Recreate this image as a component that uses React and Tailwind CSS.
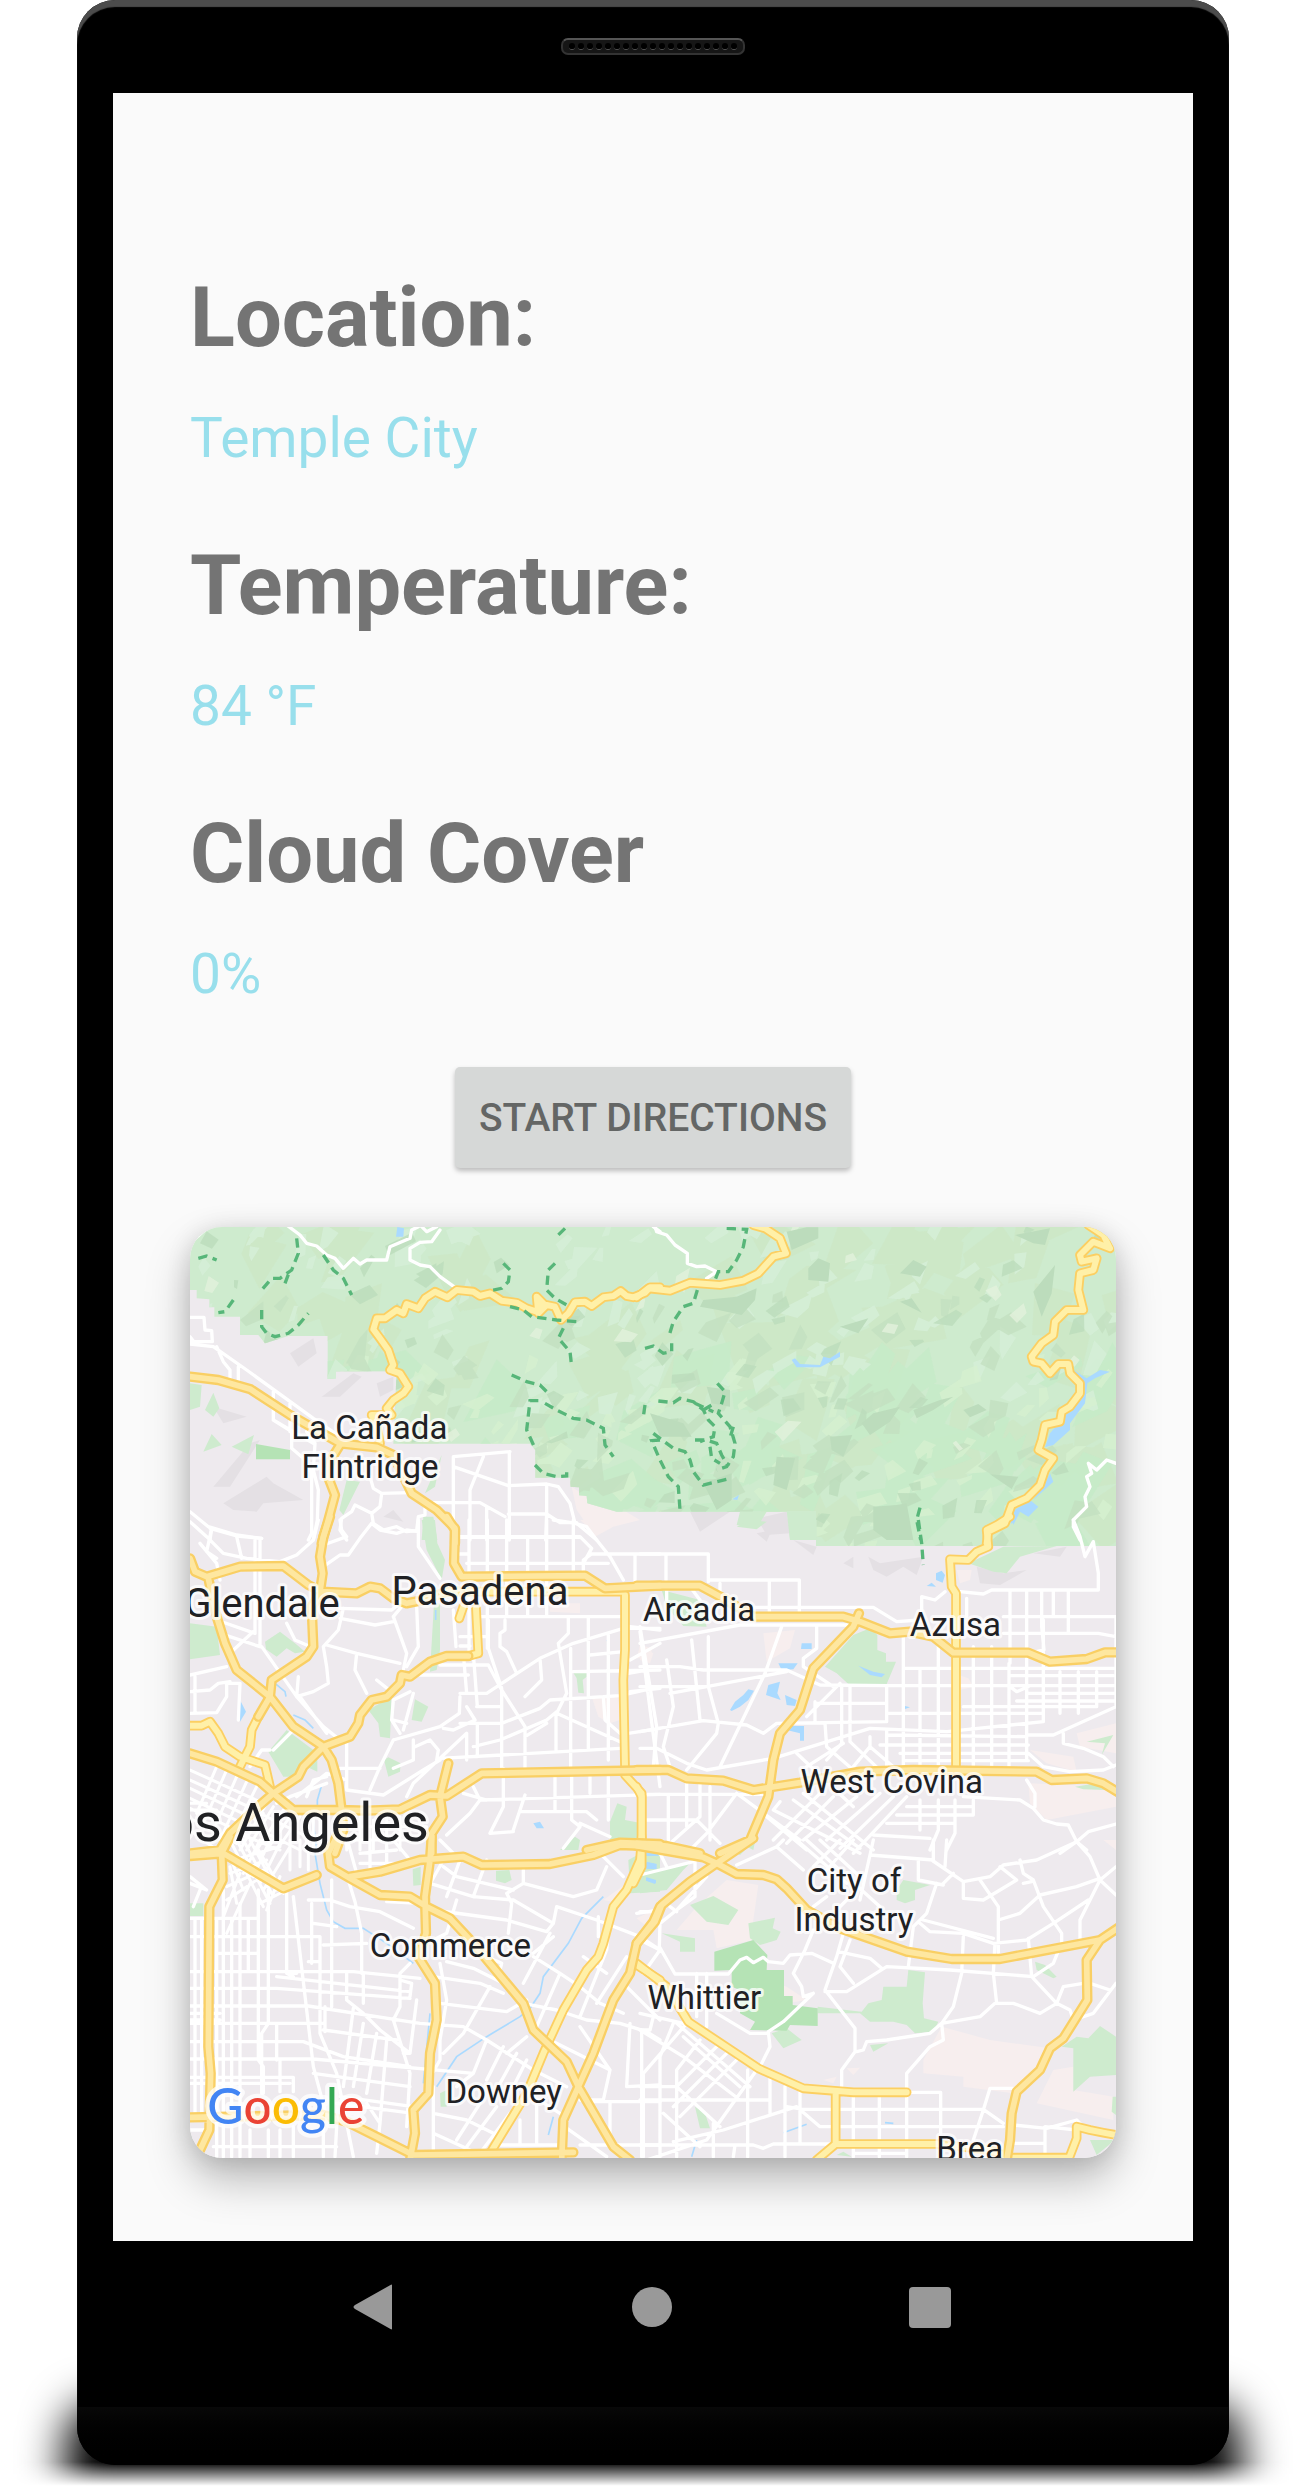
import React from "react";

/* Map artwork: 3 units per pixel, split into six tiles that are placed by their origin. */
const FOREST =
  "M0 0V189H20V214L58 217V241H73V269H150V324H205L225 349 295 327H413V456L438 454V433H620L610 650H1020L1036 669V752H1140L1142 779 1167 781V805L1190 807 1192 829 1280 854H1878V957H2778V0Z";

const TILES = [
  {
    at: "translate(-30 -51)",
    minor:
      "M320 45L360 75 380 100 410 108 440 135 465 145 490 175 520 145 540 162 560 150 620 150 630 110 690 85 695 60 715 50M780 60L755 95 720 97 690 115V150L720 165 750 170 780 200 825 232M725 50L740 65 770 50M1420 50L1440 65M30 100L85 50M30 322H72L75 360 95 362 97 395H30M30 402L100 410 200 480 400 625 480 680M30 380L45 400M110 410L130 455 150 480V505M175 470V510M280 545V630L335 665V715L370 745 395 790V970L385 990M330 580V665M280 630L400 700M380 665L405 700 400 780 415 840 412 930 400 990M990 725L820 740V930M910 740L870 840V990M820 770L985 827 1100 822 1135 830 1170 880 1185 940 1220 950 1250 990M988 725V990M1100 822V910L1097 990M760 878H900L975 920M985 912H1100L1140 938H1190M920 890V990M840 982H1200M570 800L580 835 605 850 690 848M605 850L600 890 575 910 525 885 515 905 485 925 480 960 500 990M575 910L580 940 610 960 650 950 680 965 710 962 715 920 735 915V870M30 905L85 950 170 975 245 985M95 955L90 990",
    trail:
      "M350 85L355 130 335 180 300 205 275 205 245 240M315 220L330 180M430 135L460 180 490 205 515 255M160 270L135 305 115 308M245 300V350L260 370 285 380 325 370 355 345 385 310M55 145L80 138 110 150M970 160L990 180 985 215 965 235 930 242M1155 55L1125 85M1125 160L1105 180 1100 240 1125 265 1160 285M990 290L1030 300 1055 320 1130 330 1190 335M1150 355L1135 385 1170 425 1175 470M995 495L1040 515 1080 525 1105 550M1075 572H1050L1040 660 1065 715M1065 765L1090 790 1130 800 1160 798V775M1095 580L1130 600 1180 625 1220 630 1270 655 1275 705 1300 740",
    water: "M652 51L672 55 670 80 648 80Z",
    park: "M30 520L65 525 60 590 30 600ZM75 600L100 548 118 595 100 620ZM70 725L95 672 125 705ZM155 710L222 675 205 733ZM735 850L785 735 765 830ZM500 810L540 815 490 915 478 900ZM730 920L760 920 772 990 725 990ZM400 780L380 700 410 820Z",
    parkDark: "M228 702L262 708 330 720V748H228Z",
    pink: "M1175 830L1235 870 1330 900 1380 930 1300 950 1245 980 1190 900Z",
    shade:
      "M330 430L400 385 410 430 355 470ZM425 560L520 490 545 500 480 560ZM100 590L200 620 130 640ZM130 880L260 800 280 820 370 870 250 880 230 905 160 900ZM210 700L240 690 150 830 100 830ZM610 920L640 900 670 935ZM590 520L640 500 640 540 600 560Z",
    freeway:
      "M30 500L115 510 212 538 330 615 480 700 590 712 640 735 695 850 770 900 825 955V1000M480 705L455 745 440 790 465 855 445 930 425 1000",
    state:
      "M1440 232H1410L1395 248 1360 262 1340 258 1322 243 1300 258 1270 262 1235 288 1215 275 1185 277 1165 310 1143 330 1125 290 1100 285 1075 310 1070 260 1090 280 1070 305 1040 295 1010 278 965 272 930 250 900 258 880 245 830 240 802 262 765 245 735 265 715 295 680 282 670 310 650 300 615 325 590 325 580 358 600 385 625 420 640 465 630 480 660 490 685 530 670 550 640 570 620 595 635 615 575 615 590 650 600 700",
  },
  {
    at: "translate(1350 -51)",
    minor:
      "M45 50L50 65 80 75 105 105 142 130V160L170 170 195 168 230 185 200 205M1428 760L1400 750 1370 780 1345 760 1355 790 1340 800 1350 830 1335 860 1340 890 1300 930V950L1320 990",
    trail:
      "M260 55L320 58 310 110 290 150 265 185 235 185 225 210M172 240L160 280 130 290 100 335 85 385M15 415L40 408 70 430 95 425V400M232 520L255 545 245 580 235 610 270 650 285 700 280 740 260 770 230 780M55 573L100 578 120 565 160 575 190 600 205 630 225 650 220 680 180 695M190 600L215 585M165 580L220 605M15 585L10 620M40 670L60 685 100 715 135 725 150 750 160 785 190 825 260 808M60 690L35 692 60 750 85 800 115 830 120 900M165 690L200 690 230 700 245 735 265 770M210 710L215 745 240 760M280 650L268 690M840 893L830 930 842 990",
    water:
      "M455 450L465 445 480 462 540 465 550 440 570 445 600 425V440L540 472 470 472ZM1300 480L1340 505 1380 480 1410 485 1365 505 1342 520 1335 580 1290 640 1290 660 1240 705 1215 712 1230 670 1290 600 1325 540ZM1230 790L1240 815 1180 870 1215 820ZM1115 905L1170 870 1195 890 1165 920 1140 905 1120 945ZM277 868L297 855 292 870Z",
    park: "M300 905L380 905 350 955 290 945ZM440 904L528 904V985L450 990Z",
    shade: "M150 905L270 905 180 965ZM350 925L440 905 450 970 380 975Z",
    relief:
      "M505 175L535 145 570 160 565 215 505 210ZM290 260L350 235 345 270 305 315 235 300 180 290 190 270ZM780 190L820 150 860 170 840 200ZM600 350L685 325 655 370ZM1180 245L1245 165 1235 250 1205 320ZM1125 75L1230 55 1215 105 1180 100ZM780 275L815 265 845 308ZM665 640L700 610 780 590 750 635 690 675ZM570 680L637 675 610 740 575 720ZM410 740L465 745 440 840 400 825ZM1050 793L1135 800 1115 837ZM700 890L770 885 800 880 820 990H740L700 960ZM820 600L900 570 940 560 880 600 830 625ZM970 600L1015 582 1040 600 990 622ZM440 65L500 52 535 52V85L455 120ZM30 610L130 640 155 680 60 680ZM200 530L270 540V590L215 580ZM190 820L275 790V870L230 900Z",
    state:
      "M-10 262L25 235 90 242 150 218 240 225 310 212 355 190 400 140 438 130 420 85 375 55 340 45M1345 45L1390 75 1410 115 1360 95 1320 135 1325 155 1370 145 1360 180 1320 190 1315 240 1330 300 1280 300 1245 335 1240 375 1205 400 1175 440 1180 455 1205 460 1230 490 1255 462 1285 462 1290 490 1320 520V550L1290 590 1265 605 1260 635 1215 645 1205 690 1195 720 1240 745 1215 780 1200 825 1160 865 1115 885 1095 940 1045 965 1040 1000",
  },
  {
    at: "translate(-30 879)",
    minor:
      "M30 5L80 50 130 100 200 115 300 125 350 105 400 60 415 0M95 25L80 95 110 115M170 50L185 115M90 25L170 48 245 55M240 55V380M225 60V340M60 70L110 130 120 180M480 0L485 30 500 50 430 75M430 140L480 105 505 105 540 55 575 10 600 30 650 40 680 30 715 35M715 0V80L780 175M867 0V400M922 0V385M980 0V290M835 50H1200L1235 85 1210 130M1043 50V290M1100 0V290M1180 0V155M1120 0L1190 10 1250 60 1290 110 1330 180M1440 102H1235L1210 120V160M835 102H865M860 130H1285M1365 105V190M900 290H1320M480 265L635 270 665 245M480 295L585 315 640 305M640 290L680 400 670 450M640 290L665 260M710 260L715 380 680 440M440 375L530 400 660 430M530 400L525 450 560 520M490 265L475 330 430 380 440 440 445 490 400 515 350 530M320 310L345 360 380 375M245 380L350 530 430 620 480 660M360 530L440 640M225 330L150 400M110 300L225 340M120 340L240 380M30 465L140 440M45 470V580M30 580L110 578 140 530V490L180 490 175 600M30 515L90 510 115 490 150 485M350 530L355 470M820 270L828 380M840 350H925M840 378H870M780 435H925L965 510 1035 620V745M850 400L860 520M880 400L892 560M720 465H865M925 300V385L965 505V745M975 300V330L960 340V380L980 395 1010 460M890 560H965M840 610H965L1080 565 1110 540 1320 527 1440 500M840 520H920L1080 415 1180 370 1330 325 1440 325M1080 415L1085 480 1035 530M840 530L838 580 780 620 640 660M860 560L885 600 820 630 790 625M1225 290V690M1165 295V340L1135 370 1160 520 1130 580 1320 665M1172 385V745M1285 345V720M1230 405L1330 395M1180 455L1440 450M1130 575L1100 600 960 660 880 680M1128 580V690M1035 650L1100 610M780 715L965 705 1320 685M892 610V710M860 640V720M1270 530L1275 600 1320 640M705 680L750 660 775 690 770 720M700 660V720L640 745M860 640L700 790 680 830M500 665V810L610 825 730 750 780 720M480 745H600M640 660L600 740 570 810M690 515L640 540 635 600 660 640M700 520L670 630M640 600L680 610M590 480L640 520M270 690L245 690 210 740M280 690L340 630M380 830L400 780 440 770M350 830L440 760 500 780M290 850L330 830 440 790M880 800L900 840 1440 823M850 820L920 840M970 745V860L930 940 1000 935M1035 825L1000 930M1025 875H1220M1125 770V875M1175 770V900L1200 920 1150 985M1285 770V900M1230 770V820M800 945L870 880 900 840M1220 875L1250 900M1200 910L1290 950M1345 640L1440 625M1350 420L1440 370M1350 320L1440 330M1380 335L1440 800M1350 515L1440 505M1345 460L1400 450",
    dense:
      "M30 750L250 850M30 780L250 880M30 805L240 905M30 835L220 925M30 865L200 945M40 900L170 970M110 740L50 880M140 750L70 910M170 770L100 930M200 785L120 960M230 800L140 980M260 850L180 990M280 860L200 990M310 870L230 990M330 890L260 990M360 890L290 990M150 930L300 990M180 900L360 990M240 880L400 960M400 880V990M380 880V990M420 880V990M500 900V990M540 880V990M580 900V990M620 890V990M660 890V990M510 920H740M510 960H700M30 870H110M30 850H80M30 930L110 990",
    water:
      "M180 540L198 575 180 605ZM1060 910L1080 905 1092 925 1070 925ZM1280 360H1288L1284 382Z",
    stream:
      "M285 490L315 515 318 530M340 585L375 600 400 625M425 795L412 840V870M400 910L410 990M767 270V300",
    park: "M30 310L110 320 120 405 30 418ZM255 365L300 335 345 370 375 395 345 400 320 385 290 410 258 388ZM725 0H765L772 70 795 120 785 180 740 90ZM762 250H780V390L770 450 750 455ZM565 570L635 530 630 655 600 650 595 610ZM695 600L705 538 745 560 725 605ZM612 720L625 712 662 730 660 755 625 770ZM265 695L320 630 400 690 370 770 310 770 292 740ZM1180 458H1220V470L1208 480 1212 520 1195 518 1190 475ZM1290 905L1312 850 1340 860 1335 900 1385 910V965L1290 960ZM1140 990L1185 950 1200 960 1195 990ZM395 720H412V755L380 740Z",
    pink: "M1235 530L1320 525V600L1290 610 1255 590ZM1380 375L1415 385V415H1370ZM1110 250H1200V280L1110 275ZM1200 0H1300L1250 45Z",
    freeway:
      "M450 -10L430 50 420 110 428 160 420 215M30 115L45 155 80 170 180 140 310 138 385 195 425 215 530 220 570 200 600 205 640 235 680 250 730 240 800 215 840 215M800 -10L825 30 822 130 845 170 1215 167 1275 205 1440 197M85 175L110 290 135 370 170 450 270 530 340 620 430 680 455 720 475 790 485 870 490 930 465 1000M425 215L395 260 400 380 380 410 275 480 270 530 235 590M30 700L110 725 240 785 280 820 340 870 480 870 560 872 660 868 750 825 800 828 905 760 1440 750M120 990L150 940 240 855 280 820 355 770 370 740 430 680 510 650 535 610 540 585 575 540 620 530 660 490 665 465 690 470 750 425 800 408H865M805 730L780 830 788 890 755 940V1000M30 1000L120 990M1220 990L1320 968 1440 972",
    state:
      "M840 215H1330M235 590L215 630 210 680 180 740M30 617H65L90 605 115 640 135 680 180 710 255 735 270 800M865 408L895 400 888 265M838 295L850 260M1335 225V390L1330 480 1335 740M1335 765L1385 820V990",
  },
  {
    at: "translate(1350 879)",
    minor:
      "M0 102H205V185M78 105V180M205 180H478V275M388 180V280M240 190V230M340 262H700L770 305 840 300M530 315V385L490 415V440L580 500M0 370L300 315H640M425 320L375 460 240 740M0 440H120L190 450 440 450 540 495 745 497H1428M0 500H200L440 455M90 520L200 500M155 360L180 600M205 350V500L235 610 230 640 140 750M0 320L50 620 40 740M80 420L100 560 70 680 90 740M0 635L190 602 320 615 370 640 410 610 740 605V500M0 685H50L140 730 200 750 400 715 690 625 920 635 1210 605V300M80 210V240M150 200L180 240M525 545V605M525 550H740M600 490L500 590M605 500V670L560 720M630 500V665L740 770M740 580H1210M790 350V760M845 300V230L885 240 915 215M960 215L1030 222 1055 210H1375V160L1360 65 1335 110 1320 50 1300 0M980 235V290M1110 210V430M1160 210V720M1205 215V320L1212 390 1165 400M1240 210V290M1285 210V340M1090 290H1428V560L1240 645H1165M1090 340H1375L1428 350M1000 380V740M1055 380V740M1107 430V740M795 445H1428M1110 467H1420M1110 500L1130 515 1165 500M1165 520H1428M1130 543H1428M970 560H1370M1210 455V550M1260 455V580M1315 455V580M1370 455V560M895 370V740M840 450V740M740 645L1160 650M720 675H1165M780 700H1165M790 722H1165M470 700L640 860M555 610L560 680 640 750M690 650V680L760 740M610 670L500 740M740 630V740M690 680L640 740M0 823H380M85 825V970M0 900H170M140 780V920M180 790V890L85 975M210 800V960M290 820L200 940 140 1000M170 900L240 970M290 820L480 960M420 845L400 870 660 1000M380 890L500 990M460 840L660 985M490 820L700 990M540 820L400 960M580 830L440 970M650 830L490 960M720 820L560 960M760 830L600 985M800 830L640 1000M770 885H1000V840M740 910H945V840M800 860H1000M895 840V930L870 990M840 840V930M700 945L870 955M945 910V940L920 990M970 830L1140 840 1180 865 1210 900 1250 912 1285 915 1310 965 1260 1000M1310 965L1345 935 1428 912M1310 965L1340 990M1160 780L1185 820V860M1165 700L1210 740 1290 755 1390 750 1428 735M1270 640V670L1330 685 1390 710 1420 740",
    trail: "M835 0L845 70 850 135",
    water:
      "M270 570L285 545 310 525 325 508 342 512 325 540 300 560 275 573ZM385 495L420 485 412 520 422 540 378 525ZM435 525L470 540 465 558 440 555ZM415 430H473L460 448 425 450ZM485 370H515V387H483ZM440 630L455 618H492V662H480V640ZM655 437L700 455 735 462 725 472 690 465ZM888 160L905 152 915 165 908 188 888 180ZM860 198L875 188 888 200ZM795 558L810 562 795 567ZM1110 0H1125L1115 12Z",
    park: "M555 440L640 345 690 325 712 345V390L738 400V425H768L740 492H625L590 460ZM65 210L180 240 200 320 130 318 80 260ZM985 130L1090 80 1250 78 1140 110 1100 160 1060 155ZM290 20L330 0 380 5 350 28ZM450 60L445 0H530V60ZM1340 665L1420 645 1385 705 1395 670ZM1305 800L1370 790 1400 810 1330 808ZM300 970L345 965 340 990Z",
    pink: "M370 340L465 330 450 385 380 425ZM940 460L985 475 1000 500 960 510ZM950 150H995L990 180 960 190ZM1170 690L1300 710 1310 755 1220 730ZM1165 790L1428 800V860L1220 900 1170 850ZM1310 640L1428 610V700L1320 680ZM0 380L40 400 30 430 0 420Z",
    shade:
      "M610 130L640 110V145ZM685 110L720 130 850 110 830 165 790 140 740 170 700 150ZM1010 140L1090 160 1160 150 1080 195 1020 190ZM350 40L395 30 380 65ZM460 60L530 80 520 105ZM1180 100L1280 80 1260 110Z",
    freeway:
      "M-10 197H180L250 235 340 290H610L660 305 750 340 810 335 880 350 940 398H1165L1230 425 1340 417 1395 397H1440M657 280L640 320 520 445 480 570 420 640 400 720 385 830 330 960 240 1000M-10 750H85L140 775 250 782 340 810 480 788 660 755 820 750 1190 755 1235 780 1340 775 1390 790 1440 820M-10 970L80 978 180 1000",
    state:
      "M1110 -10L1070 15 1040 30 1045 80 1010 95 985 120 930 118 935 200 948 220V740M-10 800L5 830V970",
  },
  {
    at: "translate(-30 1839)",
    minor:
      "M45 235V820M65 235V820M110 235V950M130 150V950M155 235V950M180 190V950M205 235V395M235 150V660L250 680V760M265 150V550L245 580V760M290 555V660M30 235H230M30 290H420M110 340H230M30 395H520L720 415M30 445H290L690 475M30 498H385L720 550 850 560 920 600 1060 690 1160 740M30 520H120M30 540H120M30 550H430M30 605H370L490 650 690 680M30 657H400L880 700M30 712H340V755M30 730H330M30 870H90M100 920H470M300 660V755M300 870V950M340 860V950M265 870V950M210 870V950M430 860V950M470 860L465 950M320 160V400L340 410M340 170L400 680 440 830M320 400L350 400M395 190V370M455 120V500M545 280V400M420 290V580L470 700 520 950M435 500V575M500 400V480L550 520 600 570 690 640M550 400V490M290 410L690 455M385 365H415M430 570L650 600M400 700L690 740M470 790L700 820M520 505L490 740M550 550L520 740M590 580L560 760M620 600L600 850M690 370L660 400V500L640 540 690 700 680 860M660 420L695 430 690 470M710 480L690 640H670M385 180H450L510 200 600 215 700 265M400 250L470 260M430 315L560 310M505 120L525 185 545 280M620 185L720 190M505 10L530 100M570 0V90M620 20V80M540 40L650 30M540 70H640M640 0L690 60M790 60L740 150M840 60L800 170M790 80L830 110 1000 150M750 130L880 170 1000 180 1120 250M760 210L980 240 1100 275 1120 250 1130 200 1250 240 1380 290 1440 330M780 0L830 50M920 60L880 170M1030 90V130L980 160 995 190 985 280M1030 130L1180 170 1250 150 1280 80M830 180L800 280 760 300M780 370L800 480 780 600V660L740 730M800 365L880 385 970 430 1030 490 1130 510 1220 540 1320 550 1400 575 1440 600M920 350L965 370 960 390M760 410L900 430 970 460M780 490L980 515 1040 480M1110 280L1030 430M1060 350L1140 400 1200 440 1260 490 1330 520M1140 400L1070 560M1120 290L1060 340M1210 350L1280 400M1280 330L1200 530M1340 350L1250 490M1255 230V290M1290 220L1280 330M930 440L850 580 790 640M920 600L880 700 830 740M970 620L920 720M1010 640L960 730M1040 660L1000 740M1040 590L980 640M1060 580L1100 600M1110 600L1290 690 1270 780 1200 780M1200 560L1290 690M1350 550L1340 740 1440 735M1230 785H1440M1290 785V915M1385 570V950M1200 915H1440M1020 840V915M960 915H1140M1140 850L1280 950M1060 770L1140 820M900 790L830 900M950 800L860 920M990 820L900 940M760 740V950M760 820L860 840 940 880M760 880L870 930M540 850L700 950M560 790L600 850 590 940M480 770L700 800M1070 790V915M1370 220L1440 210M1340 440L1440 540M30 130L80 150 30 110M60 150L40 200M1270 50L1330 110",
    dense:
      "M150 0L250 200M170 0L270 190M190 0L280 170M210 0L290 150M230 20L310 160M160 60L300 20M150 100L260 60M140 180L260 100M140 140L250 90M180 100L130 230M210 130L140 280M240 0L190 100M270 0L220 110M300 10L240 130M330 20L250 150M330 90V0M360 80V0M385 90V0M300 110L260 210M320 150L240 190M150 50L190 150M150 80L170 190",
    water: "M1400 65L1430 72V88L1398 86ZM1398 32L1432 38V48H1402ZM1400 112L1428 120V130L1400 122Z",
    stream:
      "M405 40L420 130 440 210 460 245 495 265 550 265 620 310 700 370M750 520L730 730M1270 170L1205 235 1165 310 1090 410 1080 460 1050 505 1020 530 920 590 830 650 770 740M1120 830L1105 885",
    park: "M30 190H70V228H30ZM698 88L722 80V135L700 137ZM948 92L988 90 995 120 975 130 948 122ZM1345 60L1400 30H1440V155L1350 160ZM780 760L800 750V800H782Z",
    pink: "M1270 180L1340 130 1320 190ZM1370 235L1440 200 1400 260Z",
    freeway:
      "M30 48L130 40 310 145 410 105M150 -10L125 40 128 120 88 200 85 620 92 700 88 870 60 930M470 -10L445 40 450 80 510 115 600 165 690 170 740 200 810 235 880 310 930 370 1030 490 1060 570 1160 665 1195 740 1300 920 1350 960M510 110L600 95 720 60 850 50 905 75 1110 72 1240 45 1320 15 1440 20M755 -10L750 60 735 170 738 280 715 350 765 430 770 540 750 640 745 760 700 810 705 880 690 960M30 832L430 825 500 845 700 945 1180 937M1440 200L1420 245 1370 310 1350 400 1300 480 1240 640 1195 740 1150 840 1145 960",
    state:
      "M1385 0L1380 60 1340 150 1300 200 1270 310 1255 350 1220 390 1150 510 1090 640 1040 760 930 940M1370 375L1440 420",
  },
  {
    at: "translate(1350 1839)",
    minor:
      "M0 105L160 65M60 40L80 80M110 210L165 170V60M90 200L110 215M0 215H50M200 110L110 210 60 250 58 320 105 402H265L300 360 320 352 340 368 370 352 385 365 430 370 450 345 515 340 580 370M0 300L60 330 10 400M170 400V530M200 400V560M290 75L410 20 430 0M410 20L490 90M470 0L620 130M500 0L720 200M540 0L660 110M600 0L520 80M640 0L560 90M700 0L660 180M690 45L880 60V0M520 200L560 170M590 210L640 160M835 60V120L910 135M875 60L970 125 1050 110 1090 75 1190 60 1310 5 1350 50 1380 120 1428 165M970 125V175L1030 180 1130 120 1080 80M1020 120L1075 200V340M1140 60L1150 100 1180 120 1210 200 1265 280V320M1150 130L1175 125M1200 165L1310 140 1380 115M1380 120L1320 240V320M1075 240L1140 220 1200 165M1345 180L1240 250M1380 120L1428 80M910 130L940 100M890 130L860 220 820 260 805 380M915 80L920 0M840 250L870 275 970 280 1060 310 1160 300 1240 250M850 240L1060 295M970 290L965 400 940 500 905 550 870 580 740 600 680 605 670 630 650 635M1065 310L1060 400 1070 490M520 270L495 330 460 400 485 440 490 470 520 460M610 280L590 350 555 450 645 565V635L605 690V750M630 300L600 380 640 430M595 335L690 355 725 385M555 455H620L740 380 930 390 1180 410 1240 370 1260 320M1165 295L1175 410 1250 490 1290 510 1300 540 1360 520 1428 430M905 550L1020 530 1065 490H1120L1200 520 1250 490 1270 440 1330 430M1350 430L1410 450M905 550L910 600 870 620 800 700V950M520 460L430 545 385 575 390 620 360 680M230 520L330 580 385 580M390 710V820M435 740V950M480 755V910M323 690V950M0 570L130 650 300 780H380M140 550L10 700V950M100 550L60 650V950M180 600L110 690V950M0 740H110L240 860M230 620L110 740M260 640L100 800M300 650L120 830M350 690L200 900 20 960M0 520L130 550M0 570L30 570 40 530M110 550L330 740M130 590L300 740M70 820L180 920M0 780H390M0 915H340L370 925 400 912H580M100 905L250 870 470 800 540 860H1090M440 800L490 808H1030L1090 850M220 850V950M280 950L285 915M640 770V950M718 770V950M810 757H902V880M1120 745H1050L1030 810 1000 900M1120 855L1220 865 1310 840 1320 850M1120 910H1215V860L1310 870M1215 910V950M640 940H800",
    stream: "M430 878L500 853M735 848L760 850M170 900L155 950",
    water: "M15 32L55 40V48H18ZM18 68L48 72V85H15ZM18 112L48 125 45 132 18 122Z",
    park: "M150 195L220 168 295 210 265 255 200 245ZM325 250L405 233 398 265 422 275 410 300 360 315 330 295ZM65 280L165 295V335H120V305ZM533 500L665 515 685 490 725 480 730 440 800 440 805 390 855 397 848 490 852 535 895 545 880 575 825 580 800 555 760 545 690 545 660 520 533 520ZM395 580L440 565 485 600 430 625ZM1265 620L1310 590 1345 595 1380 558 1428 590V705L1350 710 1300 755V625ZM770 150L790 120 870 135 825 150V180L795 190 770 180ZM165 800L195 820 210 865 180 865ZM690 615L745 610 700 635ZM1350 900H1425L1370 945ZM1185 365L1215 375 1250 410 1240 415 1190 390ZM0 100L80 85 160 60 130 90 80 150 0 160ZM590 945L610 935 635 950ZM1418 770H1428V825L1415 815ZM290 40L345 0 300 45Z",
    parkDark:
      "M223 335L340 300 382 345 380 390H432V468H458V495L533 505V558L450 555 440 572 330 570 345 545 300 520V450L275 440V390L223 392Z",
    pink: "M170 200L260 120 355 135 340 240V300L230 325 220 270 110 270ZM850 660L905 560 1050 600 1230 625 1200 690 1120 760 970 740V710L850 700ZM1240 690L1300 680V750L1420 770V840L1190 790ZM380 420L440 440 500 480 440 490ZM550 720L590 710 580 730ZM620 685L660 683 640 705ZM1390 0H1428V30Z",
    freeway:
      "M-10 17L190 52 230 70 290 102 370 105 410 118 440 145 500 210 600 265 800 335 935 357H1080L1380 300 1440 260M340 -5L230 70 150 125 65 195 45 245 -10 310M1380 300L1340 360 1342 480 1270 595 1230 625 1200 690 1130 755 1115 820 1110 900 1100 960",
    state:
      "M-10 370L80 440 145 545 355 685 490 745 640 757H800M587 760V912H890L1050 930 1110 953H1285M587 912L530 960M1428 885L1390 878 1350 870 1310 860V895L1285 960M5 -10V80L-20 130",
  },
];

const LABELS = [
  ["La Cañada", 538, 636, 99],
  ["Flintridge", 540, 752, 99],
  ["Glendale", 216, 1171, 120],
  ["Pasadena", 870, 1134, 120],
  ["Arcadia", 1527, 1182, 99],
  ["Azusa", 2296, 1226, 99],
  ["West Covina", 2105, 1699, 99],
  ["Commerce", 781, 2191, 99],
  ["Downey", 941, 2629, 99],
  ["City of", 1992, 1994, 99],
  ["Industry", 1992, 2111, 99],
  ["Whittier", 1543, 2347, 99],
  ["Brea", 2339, 2800, 99],
];

/* Facet sets that give the mountains their relief: broad ones first, then fine ones. */
const FACETS = [
  { color: "#cde7c6", count: 110, size: 110, top: 0, bottom: 980 },
  { color: "#c5ebc8", count: 90, size: 100, top: 420, bottom: 980 },
  { color: "#d6efd8", count: 110, size: 42, top: 0, bottom: 560 },
  { color: "#d6f0d0", count: 120, size: 38, top: 400, bottom: 980 },
  { color: "#c3e0c1", count: 130, size: 46, top: 200, bottom: 980 },
  { color: "#bcdcbc", count: 75, size: 34, top: 0, bottom: 980 },
  { color: "#e2f1dc", count: 16, size: 30, top: 0, bottom: 700 },
];

function buildRelief() {
  let seed = 71;
  const next = () => {
    seed = (seed * 16807) % 2147483647;
    return seed / 2147483647;
  };
  return FACETS.map(({ color, count, size, top, bottom }) => {
    let d = "";
    for (let i = 0; i < count; i += 1) {
      const x = next() * 2778;
      const y = top + next() * (bottom - top);
      const reach = size * (0.6 + next() * 0.9);
      const tilt = -1.3 + next() * 1.2;
      const points = [0, 1, 2, 3].map((k) => {
        const angle = (k * Math.PI) / 2 + next() * 1.3;
        const px = Math.cos(angle) * reach * (0.6 + next() * 0.7);
        const py = Math.sin(angle) * reach * 0.55;
        return [
          Math.round(x + px * Math.cos(tilt) - py * Math.sin(tilt)),
          Math.round(y + px * Math.sin(tilt) + py * Math.cos(tilt)),
        ].join(" ");
      });
      d += `M${points.join("L")}Z`;
    }
    return { color, d };
  });
}

const RELIEF = buildRelief();

function Layer({ name, ...rest }) {
  return (
    <g {...rest}>
      {TILES.filter((tile) => tile[name]).map((tile) => (
        <path key={tile.at} d={tile[name]} transform={tile.at} />
      ))}
    </g>
  );
}

function RegionMap() {
  return (
    <svg
      viewBox="0 0 2778 2793"
      role="img"
      aria-label="Map of the area around Temple City"
      className="block h-auto w-full rounded-[32px] bg-[#eeeaee] font-[Roboto,sans-serif]"
    >
      <defs>
        <clipPath id="forest-area">
          <path d={FOREST} />
        </clipPath>
      </defs>
      <Layer name="pink" fill="#f7eeee" />
      <Layer name="shade" fill="#e4e0e4" />
      <path d={FOREST} fill="#ceebce" />
      <g clipPath="url(#forest-area)">
        {RELIEF.map(({ color, d }) => (
          <path key={color} d={d} fill={color} opacity="0.8" />
        ))}
        <Layer name="relief" fill="#bcdcbc" />
      </g>
      <Layer name="park" fill="#ceebce" />
      <Layer name="parkDark" fill="#b5e3b5" />
      <Layer name="water" fill="#aadaff" />
      <Layer name="stream" fill="none" stroke="#aadaff" strokeWidth="5" />
      <g fill="none" strokeLinejoin="round" strokeLinecap="round">
        <Layer name="dense" stroke="#fff" strokeWidth="9" />
        <Layer name="minor" stroke="#fff" strokeWidth="10" />
        <Layer name="state" stroke="#fccf62" strokeWidth="29" />
        <Layer name="state" stroke="#fff0a8" strokeWidth="18" />
        <Layer name="freeway" stroke="#f9cf64" strokeWidth="31" />
        <Layer name="freeway" stroke="#fee7a0" strokeWidth="17" />
      </g>
      <Layer name="trail" fill="none" stroke="#57b679" strokeWidth="10" strokeDasharray="28 17" />
      <g
        fill="#202124"
        stroke="#fff"
        strokeOpacity="0.75"
        strokeWidth="18"
        strokeLinejoin="round"
        textAnchor="middle"
        style={{ paintOrder: "stroke" }}
      >
        {LABELS.map(([name, x, y, size]) => (
          <text key={name} x={x} y={y} fontSize={size}>
            {name}
          </text>
        ))}
        <text x="717" y="1842" fontSize="162" textAnchor="end">
          Los Angeles
        </text>
      </g>
      <text
        x="52"
        y="2692"
        fontSize="149"
        fontWeight="500"
        stroke="#fff"
        strokeOpacity="0.75"
        strokeWidth="26"
        strokeLinejoin="round"
        className="font-[Lato,sans-serif]"
        style={{ paintOrder: "stroke" }}
      >
        <tspan fill="#4285f4">G</tspan>
        <tspan fill="#ea4335">o</tspan>
        <tspan fill="#fbbc04">o</tspan>
        <tspan fill="#4285f4">g</tspan>
        <tspan fill="#34a853">l</tspan>
        <tspan fill="#ea4335">e</tspan>
      </text>
    </svg>
  );
}

function Reading({ label, value }) {
  return (
    <section className="flex flex-col gap-[39px]">
      <h2 className="text-[83px] leading-[98px] font-bold text-[#747474]">{label}</h2>
      <p className="text-[55px] leading-[64px] text-[#98dfec]">{value}</p>
    </section>
  );
}

function Speaker() {
  return (
    <div className="flex h-[17px] w-[184px] items-center justify-center gap-[3px] rounded-[7px] border-2 border-[#333] border-t-[#555] bg-[#161616]">
      {Array.from({ length: 19 }, (_, i) => (
        <span key={i} className="h-[7px] w-[6px] rounded-full border-b border-[#555] bg-black" />
      ))}
    </div>
  );
}

function NavButton({ label, children }) {
  return (
    <button type="button" aria-label={label} className="flex size-12 items-center justify-center">
      <svg viewBox="0 0 48 48" className="size-12" fill="#999">
        {children}
      </svg>
    </button>
  );
}

export default function App() {
  return (
    <div className="min-h-screen overflow-hidden bg-white pr-[76px] pb-[25px] pl-[77px] font-[Roboto,sans-serif]">
      <div className="relative">
        <div className="absolute -inset-x-[76px] -bottom-[25px] h-[140px] overflow-hidden [mask-image:linear-gradient(to_bottom,black_80%,transparent_97%)]">
          <div className="absolute inset-x-[64px] top-[52px] -bottom-[60px] rounded-[40px] bg-black blur-[22px]" />
        </div>
        <div className="relative flex flex-col overflow-hidden rounded-[38px] bg-black shadow-[inset_0_7px_1px_#4c4c4c]">
          <header className="flex h-[93px] items-center justify-center">
            <Speaker />
          </header>

          <main className="mx-[36px] flex flex-col bg-[#fafafa] px-[77px] pt-[176px] pb-[83px]">
            <div className="flex flex-col gap-[67px]">
              <Reading label="Location:" value="Temple City" />
              <Reading label="Temperature:" value="84 °F" />
              <Reading label="Cloud Cover" value="0%" />
            </div>

            <button
              type="button"
              className="mt-[61px] h-[101px] self-center rounded-[5px] bg-[#d6d8d7] px-6 pt-[2px] text-[39px] font-medium text-[#646665] shadow-[0_3px_5px_rgba(0,0,0,0.25)]"
            >
              START DIRECTIONS
            </button>

            <div className="mt-[59px] rounded-[32px] shadow-[0_22px_44px_rgba(0,0,0,0.26),0_2px_24px_rgba(0,0,0,0.12)]">
              <RegionMap />
            </div>
          </main>

          <nav aria-label="System" className="flex h-[166px] justify-center gap-[231px] pt-[42px] pr-[2px]">
            <NavButton label="Back">
              <path d="M43 2.500V45.500Q43 47 41.500 46L6 26Q3 24 6 22L41.500 2Q43 1 43 2.500Z" />
            </NavButton>
            <NavButton label="Home">
              <circle cx="24" cy="24" r="20" />
            </NavButton>
            <NavButton label="Overview">
              <rect x="2" y="4" width="42" height="41" rx="4" />
            </NavButton>
          </nav>
          <div className="h-[58px] bg-linear-to-b from-[#080808] to-black" />
        </div>
      </div>
    </div>
  );
}
